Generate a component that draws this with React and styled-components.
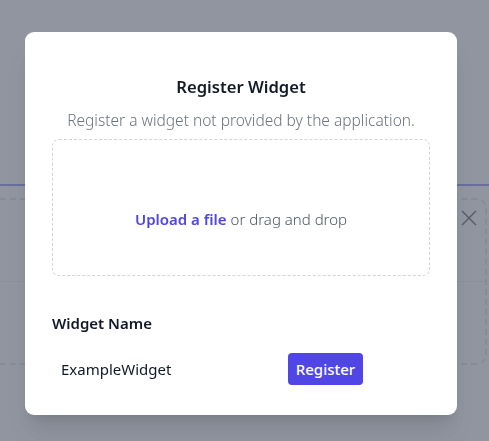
import React from "react";
import styled, { createGlobalStyle } from "styled-components";

const Global = createGlobalStyle`
  html, body { margin: 0; padding: 0; background: #ffffff; }
  body { font-family: "Noto Sans", "Open Sans", sans-serif; }
  * { box-sizing: border-box; }
`;

const Page = styled.div`
  width: 489px;
  height: 441px;
  overflow: hidden;
  background: #ffffff;
`;

const PageHeader = styled.div`
  height: 186px;
  border-bottom: 2px solid #6366f1;
`;

const PageCard = styled.div`
  margin: 12px 2px 0 -20px;
  height: 167px;
  border: 2px dashed #d1d5db;
  border-radius: 10px;
  display: flex;
  flex-direction: column;
`;

const CardTop = styled.div`
  height: 82px;
  border-bottom: 1px solid #e5e7eb;
  display: flex;
  justify-content: flex-end;
  padding: 8px 6px 0 0;
  color: #111827;
`;

const Overlay = styled.div`
  position: fixed;
  inset: 0;
  background: rgba(107, 114, 128, 0.75);
`;

const Modal = styled.div`
  position: absolute;
  left: 25px;
  top: 32px;
  width: 432px;
  height: 383px;
  background: #ffffff;
  border-radius: 9px;
  box-shadow: 0 20px 25px -5px rgba(0, 0, 0, 0.1), 0 8px 10px -6px rgba(0, 0, 0, 0.1);
  padding: 41px 27px 0;
  display: flex;
  flex-direction: column;
`;

const Title = styled.h3`
  margin: 0;
  text-align: center;
  font-size: 16.6px;
  line-height: 28px;
  font-weight: 600;
  color: #111827;
`;

const Subtitle = styled.p`
  margin: 7px 0 0;
  text-align: center;
  font-size: 15.5px;
  line-height: 24px;
  font-weight: 300;
  color: #6b7280;
`;

const Dropzone = styled.div`
  margin-top: 7px;
  height: 137px;
  border: 1px dashed #d1d5db;
  border-radius: 7px;
  display: flex;
  align-items: center;
  justify-content: center;
  padding-top: 22px;
  font-size: 15px;
  font-weight: 300;
  color: #4b5563;
`;

const UploadLink = styled.span`
  color: #4f46e5;
  font-weight: 600;
  margin-right: 4px;
`;

const Label = styled.div`
  margin-top: 35px;
  font-size: 15px;
  line-height: 24px;
  font-weight: 600;
  color: #111827;
`;

const Row = styled.div`
  margin-top: 18px;
  display: flex;
  align-items: center;
`;

const NameInput = styled.input`
  width: 236px;
  height: 32px;
  border: none;
  outline: none;
  padding: 0 9px;
  font-family: inherit;
  font-size: 15px;
  font-weight: 400;
  color: #111827;
  background: transparent;
`;

const Button = styled.button`
  height: 32px;
  width: 75px;
  border: none;
  border-radius: 4px;
  background: #4f46e5;
  color: #ffffff;
  font-family: inherit;
  font-size: 15px;
  font-weight: 500;
  padding: 0;
`;

export default function App() {
  return (
    <Page>
      <Global />
      <PageHeader />
      <PageCard>
        <CardTop>
          <svg width="20" height="20" viewBox="0 0 24 24" fill="none" stroke="currentColor" strokeWidth="1.6" strokeLinecap="round">
            <path d="M4 4l16 16M20 4L4 20" />
          </svg>
        </CardTop>
      </PageCard>
      <Overlay>
        <Modal>
          <Title>Register Widget</Title>
          <Subtitle>Register a widget not provided by the application.</Subtitle>
          <Dropzone>
            <UploadLink>Upload a file</UploadLink> or drag and drop
          </Dropzone>
          <Label>Widget Name</Label>
          <Row>
            <NameInput defaultValue="ExampleWidget" />
            <Button>Register</Button>
          </Row>
        </Modal>
      </Overlay>
    </Page>
  );
}
